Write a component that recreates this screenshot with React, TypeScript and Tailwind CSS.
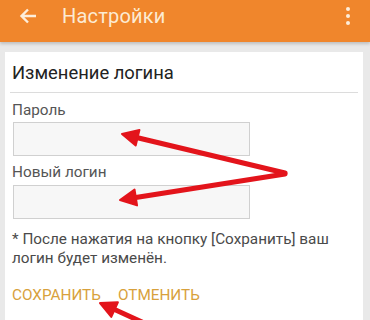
import React from "react";

const font = { fontFamily: "Roboto, 'Noto Sans', sans-serif" };

const Arrow: React.FC<{ x1: number; y1: number; x2: number; y2: number }> = ({
  x1,
  y1,
  x2,
  y2,
}) => {
  // head at (x2, y2)
  const a = Math.atan2(y2 - y1, x2 - x1);
  const len = 16;
  const w = 8;
  const bx = x2 - Math.cos(a) * len;
  const by = y2 - Math.sin(a) * len;
  const px = -Math.sin(a) * w;
  const py = Math.cos(a) * w;
  return (
    <g>
      <line
        x1={x1}
        y1={y1}
        x2={bx}
        y2={by}
        stroke="#e3141b"
        strokeWidth={5}
        strokeLinecap="round"
      />
      <polygon
        points={`${x2},${y2} ${bx + px},${by + py} ${bx - px},${by - py}`}
        fill="#e3141b"
        stroke="#e3141b"
        strokeWidth={2}
        strokeLinejoin="round"
      />
    </g>
  );
};

export default function App() {
  return (
    <div
      className="relative w-[370px] h-[320px] overflow-hidden bg-[#e9e9e9]"
      style={font}
    >
      <header className="h-[42px] bg-[#f0862c] shadow-[0_2px_3px_rgba(0,0,0,0.18)] flex items-start">
        <div className="h-[32px] w-full flex items-center pl-[19px] pr-[20px]">
          <svg width="18" height="16" viewBox="0 0 18 16" className="shrink-0">
            <path
              d="M17 8H3M9 1.5L2.5 8L9 14.5"
              fill="none"
              stroke="#fdeedb"
              strokeWidth="2.4"
            />
          </svg>
          <span className="ml-[25px] text-[20px] text-[#fcebd3] tracking-[0.2px]">
            Настройки
          </span>
          <div className="ml-auto flex flex-col gap-[3px]">
            <span className="w-[4px] h-[4px] rounded-full bg-[#fdeedb]" />
            <span className="w-[4px] h-[4px] rounded-full bg-[#fdeedb]" />
            <span className="w-[4px] h-[4px] rounded-full bg-[#fdeedb]" />
          </div>
        </div>
      </header>

      <main className="pt-[10px] pl-[5px] pr-[7px]">
        <section className="bg-white h-[300px]">
          <h1 className="pt-[9px] px-[7px] text-[18.4px] leading-[24px] text-[#222]">
            Изменение логина
          </h1>
          <div className="mt-[7px] mx-[5px] h-px bg-[#dcdcdc]" />

          <div className="px-[7px]">
            <label className="block mt-[7px] text-[15.3px] leading-[20px] text-[#555]">
              Пароль
            </label>
            <div className="mt-[2px] ml-[1px] w-[237px] h-[34px] border border-[#d0d0d0] bg-[#f7f7f7]" />

            <label className="block mt-[6px] text-[15.3px] leading-[20px] text-[#555]">
              Новый логин
            </label>
            <div className="mt-[3px] ml-[1px] w-[237px] h-[34px] border border-[#d0d0d0] bg-[#f7f7f7]" />

            <p className="mt-[11px] text-[15.3px] leading-[18.5px] text-[#4a4a4a]">
              * После нажатия на кнопку [Сохранить] ваш
              <br />
              логин будет изменён.
            </p>

            <div className="mt-[18px] flex gap-[17px] text-[15.3px] leading-[20px] text-[#d8a13c]">
              <span>СОХРАНИТЬ</span>
              <span>ОТМЕНИТЬ</span>
            </div>
          </div>
        </section>
      </main>

      <svg
        className="absolute inset-0 pointer-events-none"
        width="370"
        height="320"
        viewBox="0 0 370 320"
      >
        <Arrow x1={285} y1={173} x2={122} y2={134} />
        <Arrow x1={285} y1={174} x2={120} y2={200} />
        <Arrow x1={142} y1={322} x2={100} y2={303} />
      </svg>
    </div>
  );
}
